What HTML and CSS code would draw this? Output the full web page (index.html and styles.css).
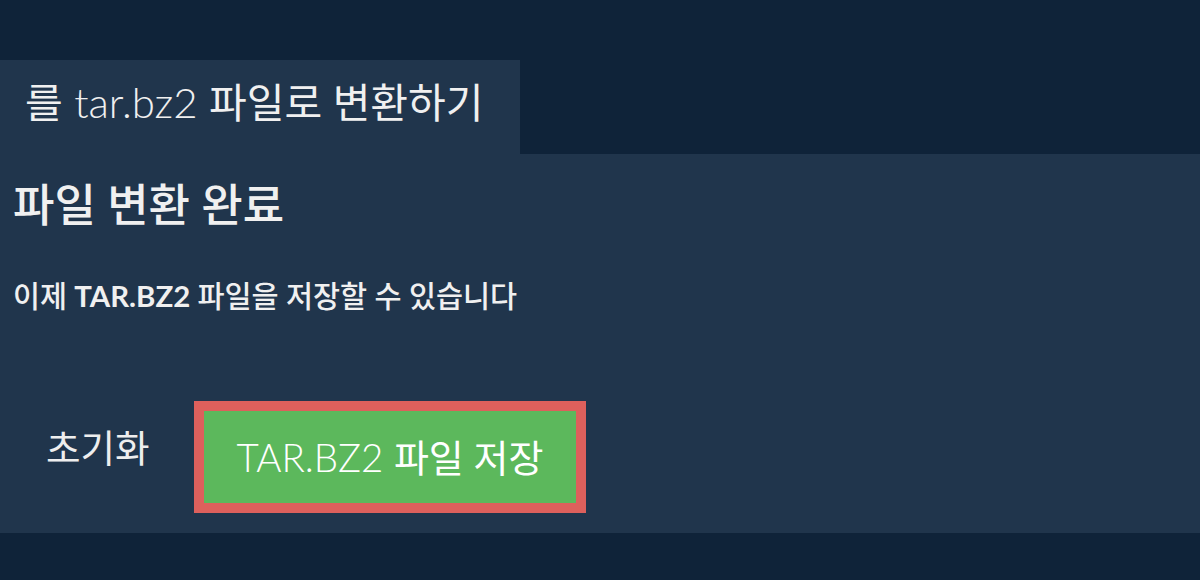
FILE: index.html
```html
<!DOCTYPE html>
<html lang="ko">
<head>
<meta charset="utf-8">
<link rel="stylesheet" href="styles.css">
</head>
<body>
<div class="page">
  <div class="tab"><span class="ko">를</span> tar.bz2 <span class="ko">파일로 변환하기</span></div>
  <div class="panel">
    <h1 class="title">파일 변환 완료</h1>
    <p class="note"><span class="ko">이제</span> TAR.BZ2 <span class="ko">파일을 저장할 수 있습니다</span></p>
    <div class="actions">
      <button class="reset">초기화</button>
      <button class="save">TAR.BZ2 <span class="ko">파일 저장</span></button>
    </div>
  </div>
</div>
</body>
</html>
```
FILE: styles.css
```css
html, body {
  margin: 0;
  padding: 0;
  background: #0f2339;
  font-family: "Lato", "Noto Sans CJK KR", sans-serif;
  color: #f0f0f0;
}
.page {
  padding-top: 60px;
}
.tab {
  width: 520px;
  height: 94px;
  box-sizing: border-box;
  background: #20354c;
  padding: 17px 0 0 25px;
  font-size: 42px;
  font-weight: 300;
  line-height: 50px;
  white-space: nowrap;
}
.tab .ko {
  font-weight: 400;
  font-size: 41px;
}
.panel {
  background: #20354c;
  height: 379px;
  box-sizing: border-box;
  padding: 24px 13px 0;
}
.title {
  margin: 0;
  font-size: 45px;
  font-weight: 500;
  line-height: 54px;
}
.note {
  margin: 46px 0 0;
  font-size: 29.4px;
  font-weight: 700;
  line-height: 36px;
}
.note .ko {
  font-weight: 500;
}
.actions {
  display: flex;
  align-items: flex-start;
  margin-top: 87px;
}
button {
  font-family: inherit;
  color: #fff;
  cursor: pointer;
}
.reset {
  background: transparent;
  border: none;
  font-size: 37.5px;
  font-weight: 400;
  line-height: 46px;
  padding: 0;
  margin: 24px 0 0 33px;
  width: 112px;
  text-align: left;
  color: #eeeeee;
}
.save {
  margin-left: 36px;
  width: 392px;
  height: 112px;
  background: #5cb85c;
  border: 10px solid #dd605c;
  font-size: 38.5px;
  font-weight: 300;
  line-height: 46px;
  padding: 0;
  white-space: nowrap;
}
.save .ko {
  font-weight: 400;
  font-size: 38px;
}
```
